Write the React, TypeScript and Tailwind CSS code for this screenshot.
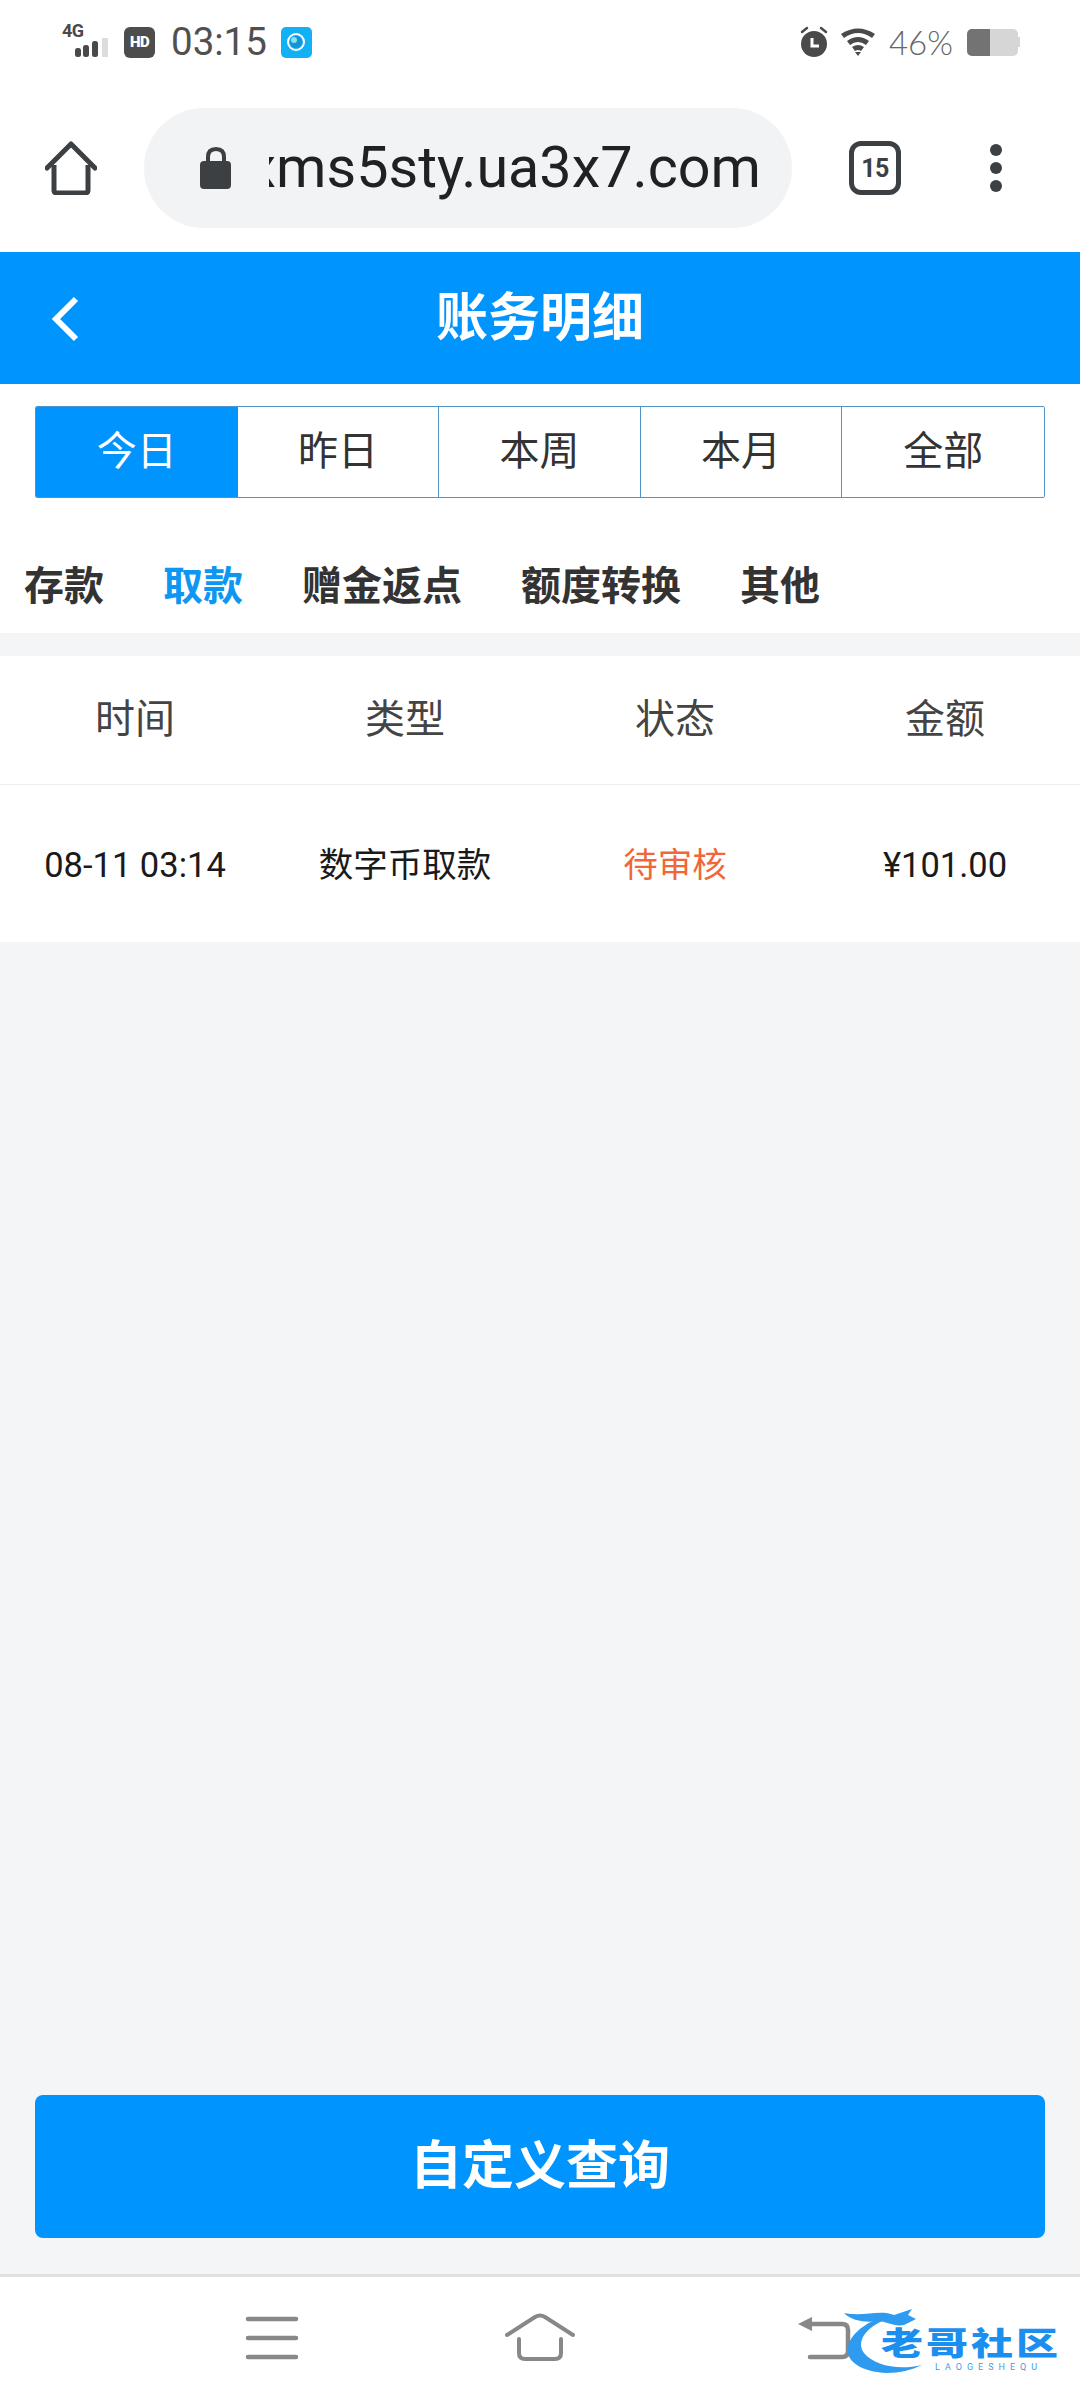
const FONT = "font-['Roboto','Noto_Sans_CJK_SC',sans-serif]";

const ranges = ['今日', '昨日', '本周', '本月', '全部'];
const tabs = ['存款', '取款', '赠金返点', '额度转换', '其他'];
const columns = ['时间', '类型', '状态', '金额'];

function StatusBar() {
  return (
    <div className="h-[88px] flex items-center justify-between pl-[62px] pr-[60px] pb-[4px]">
      <div className="flex items-center">
        <div className="relative w-[48px] h-[34px]">
          <span className="absolute left-0 top-[-5px] text-[18px] leading-[22px] font-bold tracking-[-0.5px] text-[#4a4a4a]">4G</span>
          <svg className="absolute left-0 top-0" width="48" height="34" viewBox="0 0 48 34">
            <rect x="13" y="23" width="6" height="9" rx="2.5" fill="#4a4a4a" />
            <rect x="21" y="20" width="6" height="12" rx="2.5" fill="#4a4a4a" />
            <rect x="30" y="16" width="6" height="16" rx="2.5" fill="#4a4a4a" />
            <rect x="40" y="13" width="6" height="19" fill="#dcdcdc" />
          </svg>
        </div>
        <div className="ml-[14px] w-[31px] h-[31px] rounded-[6px] bg-[#4d4d4d] flex items-center justify-center text-white text-[15px] leading-none font-black tracking-[-0.5px]">HD</div>
        <span className="ml-[16px] text-[38.5px] leading-[40px] text-[#505050]">03:15</span>
        <div className="ml-[14px] w-[31px] h-[31px] rounded-[5px] bg-[#12b0f5] flex items-center justify-center">
          <svg width="22" height="22" viewBox="0 0 22 22">
            <circle cx="11" cy="11" r="8" fill="none" stroke="#fff" strokeWidth="2" />
            <circle cx="11" cy="11" r="6" fill="#1393d8" />
            <circle cx="9" cy="9" r="3" fill="#8fe0fb" />
          </svg>
        </div>
      </div>
      <div className="flex items-center">
        <svg width="30" height="32" viewBox="0 0 30 32">
          <circle cx="15" cy="18" r="13" fill="#4a4a4a" />
          <path d="M3 6 L8 2 M27 6 L22 2" stroke="#4a4a4a" strokeWidth="2.5" strokeLinecap="round" />
          <path d="M13 12 V20 H20" fill="none" stroke="#fff" strokeWidth="3" />
        </svg>
        <svg className="ml-[11px]" width="36" height="30" viewBox="0 0 36 30">
          <path d="M1 7 Q18 -4 35 7 L32 11 Q18 1 4 11 Z" fill="#4a4a4a" />
          <path d="M7 14 Q18 6 29 14 L26 18 Q18 12 10 18 Z" fill="#4a4a4a" />
          <path d="M12 20 Q18 16 24 20 L21 24 Q18 22 15 24 Z" fill="#4a4a4a" />
          <path d="M15 25 H21 L18 29 Z" fill="#4a4a4a" />
        </svg>
        <span className="ml-[13px] text-[33px] leading-[36px] font-['Lato',sans-serif] font-light text-[#666]">46%</span>
        <div className="ml-[14px] w-[51px] h-[27px] rounded-[5px] bg-[#d6d6d6] overflow-hidden">
          <div className="w-[23px] h-full bg-[#737373]" />
        </div>
        <div className="w-[2px] h-[10px] bg-[#d6d6d6]" />
      </div>
    </div>
  );
}

function Toolbar() {
  return (
    <div className="h-[164px] flex items-center pb-[4px]">
      <svg className="ml-[45px] shrink-0" width="52" height="54" viewBox="0 0 52 54">
        <path d="M2 27 L26 3 L50 27" fill="none" stroke="#3c4043" strokeWidth="5" strokeLinecap="round" strokeLinejoin="round" />
        <path d="M9 24 V49 Q9 52 12 52 H40 Q43 52 43 49 V24" fill="none" stroke="#3c4043" strokeWidth="5" />
      </svg>
      <div className="ml-[47px] w-[648px] h-[120px] shrink-0 rounded-[60px] bg-[#f1f3f4] flex items-center pl-[56px] pr-[31px]">
        <svg className="shrink-0" width="32" height="44" viewBox="0 0 32 44">
          <path d="M8 16 V11 Q8 3 16 3 Q24 3 24 11 V16" fill="none" stroke="#3c4043" strokeWidth="4" />
          <rect x="0" y="15" width="31" height="28" rx="4" fill="#3c4043" />
        </svg>
        {/* the address is scrolled, so its first letter is clipped on the left */}
        <div className="ml-[37px] flex-1 min-w-0 overflow-hidden flex justify-end">
          <span className="text-[57.5px] leading-[68px] whitespace-nowrap text-[#202124]">xms5sty.ua3x7.com</span>
        </div>
      </div>
      <div className="ml-[57px] w-[52px] h-[54px] shrink-0 rounded-[12px] border-[5px] border-[#3c4043] flex items-center justify-center text-[25px] leading-none font-bold text-[#3c4043] tracking-[-0.5px]">15</div>
      <div className="ml-[89px] flex flex-col gap-[6px] shrink-0">
        <div className="w-[12px] h-[12px] rounded-full bg-[#3c4043]" />
        <div className="w-[12px] h-[12px] rounded-full bg-[#3c4043]" />
        <div className="w-[12px] h-[12px] rounded-full bg-[#3c4043]" />
      </div>
    </div>
  );
}

function Header() {
  return (
    <div className="relative h-[132px] bg-[#0094ff] flex items-center justify-center pt-[2px]">
      <svg className="absolute left-[50px] top-[43px]" width="30" height="48" viewBox="0 0 30 48">
        <path d="M26 4 L6 24 L26 44" fill="none" stroke="#fff" strokeWidth="6" />
      </svg>
      <h1 className="text-[52px] leading-[60px] font-bold text-white">账务明细</h1>
    </div>
  );
}

function RangeTabs() {
  return (
    <div className="h-[114px] bg-white px-[35px] pt-[22px]">
      <div className="h-[92px] grid grid-cols-5 border border-[#4f94c8] rounded-[2px] overflow-hidden">
        {ranges.map((r, i) => (
          <div
            key={r}
            className={`flex items-center justify-center text-[40px] ${i === 0 ? 'bg-[#0094ff] text-white' : 'bg-white text-[#333]'} ${i > 0 && i < 4 ? 'border-r border-[#4f94c8]' : ''}`}
          >
            {r}
          </div>
        ))}
      </div>
    </div>
  );
}

function TypeTabs() {
  return (
    <div className="h-[135px] bg-white flex items-center gap-[59px] pl-[24px] pt-[42px]">
      {tabs.map(t => (
        <span key={t} className={`text-[40px] leading-[50px] font-bold ${t === '取款' ? 'text-[#0d96f2]' : 'text-[#333]'}`}>
          {t}
        </span>
      ))}
    </div>
  );
}

function Records() {
  return (
    <div className="mt-[23px] bg-white">
      <div className="h-[129px] grid grid-cols-4 border-b border-[#eeeeee]">
        {columns.map(c => (
          <div key={c} className="flex items-center justify-center text-[40px] text-[#444]">{c}</div>
        ))}
      </div>
      <div className="h-[157px] pt-[5px] grid grid-cols-4 items-center text-center text-[34.5px] text-[#1a1a1a]">
        <div>08-11 03:14</div>
        <div>数字币取款</div>
        <div className="text-[#f0673a]">待审核</div>
        <div>¥101.00</div>
      </div>
    </div>
  );
}

function NavBar() {
  return (
    <div className="relative h-[126px] border-t-[3px] border-[#e0e0e0] bg-white flex items-start">
      <svg className="ml-[245px] mt-[37px]" width="54" height="48" viewBox="0 0 54 48">
        <path d="M3 5 H51 M3 24 H51 M3 43 H51" stroke="#888" strokeWidth="4.5" strokeLinecap="round" />
      </svg>
      <svg className="ml-[205px] mt-[36px]" width="72" height="50" viewBox="0 0 72 50">
        <path d="M3 22 L31 4 Q36 1 41 4 L69 22" fill="none" stroke="#888" strokeWidth="4" strokeLinecap="round" />
        <path d="M15 26 V40 Q15 46 21 46 H51 Q57 46 57 40 V26" fill="none" stroke="#888" strokeWidth="4" strokeLinecap="round" />
      </svg>
      <svg className="ml-[220px] mt-[38px]" width="60" height="48" viewBox="0 0 60 48">
        <path d="M2 9 L16 2 V16 Z" fill="#888" />
        <path d="M14 9 H46 Q52 9 52 15 V36 Q52 42 46 42 H14" fill="none" stroke="#888" strokeWidth="4.5" strokeLinecap="round" />
      </svg>
      {/* watermark logo */}
      <div className="absolute left-[838px] top-[26px] w-[240px] h-[80px]">
        <svg className="absolute left-0 top-0" width="110" height="80" viewBox="0 0 110 80">
          <path d="M44 14 C16 24 2 44 14 58 C28 72 60 74 84 62 C60 68 36 62 26 50 C18 40 26 24 50 16 Z" fill="#2f9bf0" />
          <path d="M6 10 C26 14 42 6 56 12 L74 6 L70 12 L78 16 L66 22 C56 24 48 18 40 18 C28 20 14 18 6 10 Z" fill="#2f9bf0" />
        </svg>
        <span className="absolute left-[43px] top-[19px] text-[42px] leading-[44px] font-black tracking-[3px] whitespace-nowrap text-[#1b8fef] scale-y-75">老哥社区</span>
        <span className="absolute left-[97px] top-[58px] text-[9px] leading-[12px] tracking-[5px] whitespace-nowrap text-[#3f9ee8]">LAOGESHEQU</span>
      </div>
    </div>
  );
}

export default function App() {
  return (
    <div className={`w-[1080px] h-[2400px] flex flex-col bg-[#f4f5f7] overflow-hidden ${FONT}`}>
      <div className="bg-white">
        <StatusBar />
        <Toolbar />
      </div>
      <Header />
      <RangeTabs />
      <TypeTabs />
      <Records />
      <div className="flex-1 flex flex-col justify-end px-[35px] pb-[36px]">
        <button className="h-[143px] w-full rounded-[8px] bg-[#0094ff] text-white text-[52px] font-bold">自定义查询</button>
      </div>
      <NavBar />
    </div>
  );
}
